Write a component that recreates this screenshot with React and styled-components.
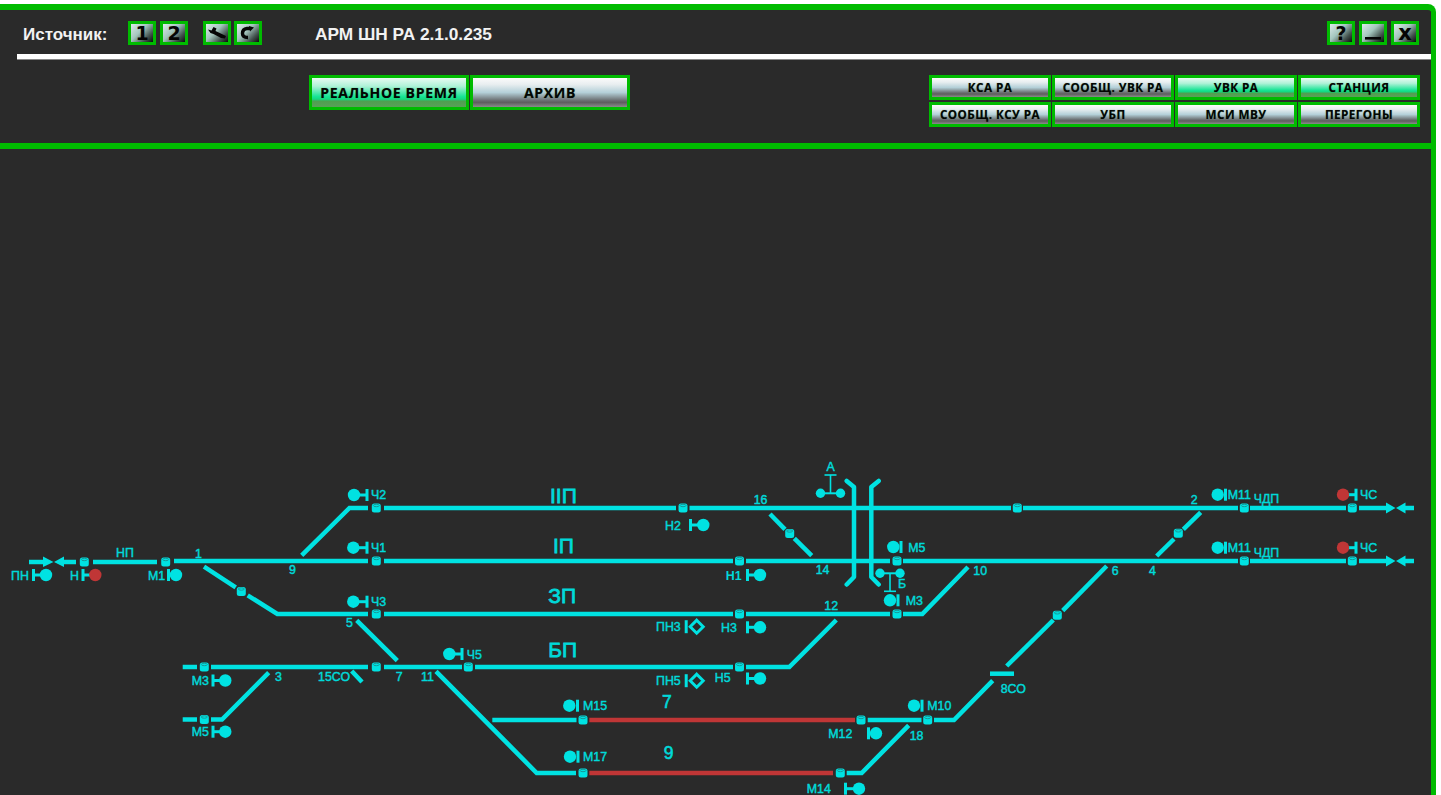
import styled, { createGlobalStyle, css } from "styled-components";

const GREEN = "#00bb00";
const CYAN = "#00e2e2";
const RED = "#c03636";

const GlobalStyle = createGlobalStyle`
  html, body {
    margin: 0;
    background: #fff;
    overflow: hidden;
  }
`;

const Window = styled.div`
  box-sizing: border-box;
  width: 1436px;
  height: 791px;
  margin-top: 4px;
  background: #2a2a2a;
  border-top: 6px solid ${GREEN};
  border-right: 5px solid ${GREEN};
  border-top-right-radius: 8px;
  overflow: hidden;
  font-family: "Liberation Sans", Arial, sans-serif;
`;

const Header = styled.header`
  height: 133px;
  border-bottom: 6px solid ${GREEN};
`;

const Toolbar = styled.div`
  display: flex;
  align-items: center;
  height: 44px;
  padding: 2px 12px 0 23px;
  box-sizing: border-box;
`;

const SourceLabel = styled.span`
  width: 105px;
  padding-top: 4px;
  color: #f2f2f2;
  font-size: 17px;
  font-weight: 700;
`;

const IconGroup = styled.div`
  display: flex;
  gap: ${(p) => p.$gap || 4}px;
  margin-right: ${(p) => p.$after || 0}px;
`;

const IconButton = styled.button`
  box-sizing: border-box;
  width: 28px;
  height: 24px;
  padding: 0;
  display: flex;
  align-items: center;
  justify-content: center;
  border: 3px solid ${GREEN};
  background: linear-gradient(135deg, #dfeaea 0%, #a4c6be 42%, #43524e 75%, #0b0b0b 100%);
  color: #050505;
  font-family: "DejaVu Sans", sans-serif;
  font-size: ${(p) => p.$size || 19}px;
  font-weight: 700;
  line-height: 1;
`;

const Title = styled.span`
  padding-top: 2px;
  color: #f2f2f2;
  font-size: 17.3px;
  font-weight: 700;
  flex: 1;
`;

const Rule = styled.div`
  height: 6px;
  margin-left: 17px;
  background: #fff;
  border-bottom: 1px solid #888;
  box-sizing: border-box;
`;

const NavRow = styled.div`
  display: flex;
  justify-content: space-between;
  padding: 15px 11px 0 309px;
`;

const NavPair = styled.div`
  display: flex;
  gap: 1px;
`;

const NavGrid = styled.div`
  display: grid;
  grid-template-columns: repeat(4, 122px);
  grid-auto-rows: 25.5px;
  gap: 1.5px 1px;
  margin-top: -0.5px;
`;

const gloss = css`
  background: ${(p) =>
    p.$active
      ? "linear-gradient(180deg, #e8faf2 0%, #b0f2d8 28%, #18e495 64%, #12d880 73%, #4f9f50 80%, #5aa058 100%)"
      : "linear-gradient(180deg, #fbfbfb 0%, #e8eef0 22%, #b4d0d8 50%, #6e7476 76%, #5e5e5e 84%, #8a8a8a 100%)"};
`;

const NavButton = styled.button`
  ${gloss}
  box-sizing: border-box;
  padding: 0;
  border: 3px solid ${GREEN};
  color: #030503;
  font-family: "Open Sans", sans-serif;
  font-weight: 700;
  white-space: nowrap;
  text-shadow: 0 0 1px rgba(0, 70, 0, 0.5);
`;

const BigButton = styled(NavButton)`
  width: 160px;
  height: 35px;
  font-size: 14px;
  letter-spacing: 0.7px;
`;

const SmallButton = styled(NavButton)`
  height: 25.5px;
  font-size: 11.7px;
  letter-spacing: 0.45px;
`;

const Scheme = styled.svg`
  display: block;
  width: 1431px;
  height: 646px;
`;

const Track = styled.polyline`
  fill: none;
  stroke: ${(p) => (p.$red ? RED : CYAN)};
  stroke-width: ${(p) => p.$w || 4.5}px;
  stroke-linejoin: ${(p) => (p.$round ? "round" : "miter")};
  stroke-linecap: ${(p) => (p.$round ? "round" : "butt")};
`;

const Thin = styled.line`
  stroke: ${CYAN};
  stroke-width: ${(p) => p.$w || 3}px;
`;

const Ball = styled.circle`
  fill: ${(p) => (p.$red ? RED : CYAN)};
`;

const Arrowhead = styled.polygon`
  fill: ${CYAN};
`;

const Diamond = styled.polygon`
  fill: none;
  stroke: ${CYAN};
  stroke-width: 3px;
`;

const JointBody = styled.rect`
  fill: ${CYAN};
`;

const JointTop = styled.ellipse`
  fill: none;
  stroke: #149a9a;
  stroke-width: 1px;
`;

const Label = styled.text`
  fill: #00d9d9;
  font-family: "Liberation Sans", Arial, sans-serif;
  font-size: ${(p) => p.$size || 12.4}px;
  font-weight: ${(p) => (p.$bold ? 700 : 400)};
  stroke: #00d9d9;
  stroke-width: ${(p) => (p.$bold ? 0 : p.$stroke || 0.45)}px;
`;

const tracks = [
  // arrows and left throat
  "29,562 45,562", "64,562 76,562", "93,562 157,562", "174,561 368,561",
  // II
  "301.7,555.3 349.5,508 368,508", "384,508 676,508", "689.5,508 1011,508", "1023,508 1238,508", "1250,508 1346,508", "1359,508 1387,508", "1405,508 1414,508",
  // I
  "384,561 733,561", "746,561 890,561", "903,561 1238,561", "1250,561 1346,561", "1359,561 1387,561", "1405,561 1414,561",
  // 3
  "204,566.7 235.7,587.3", "247.7,595.3 277.3,614 368,614", "384,614 733,614", "746,614 890,614", "903,614 922.3,614 968,567",
  // Б
  "182.7,667 197,667", "211,667 368,667", "384,667 462,667", "475,667 733,667", "746,667 789.3,667 836.3,620",
  "356.7,620.3 397.3,660.7", "351.7,671 362,682",
  "182.7,719.5 197,719.5", "211,719.5 222,719.5 268.7,672.7",
  "436,671.3 536.7,773 576,773", "846.7,773 861.7,773 908.7,725.3",
  "492.3,720 576.5,720", "867.7,720 921.5,720", "934,720 954,720 992.7,680.7",
  "990,673.7 1014,673.7",
  "1006.7,666 1053.3,620", "1062.7,610.7 1106.7,566",
  "1156.7,556 1174,539", "1183.3,529.3 1200.7,512.3",
  "770,514 785,529.3", "794.3,538.3 811.7,555.7",
];

const bridges = [
  "846.7,481 854,487 854,577 846.7,584.5",
  "878.7,481 871.3,487 871.3,577 878.7,584.5",
];

const joints = [
  [84.3, 562], [165.7, 562], [376.3, 508], [376.3, 561], [376.3, 614], [376.3, 667],
  [204.3, 667], [204.3, 719.5], [241.3, 591.5], [468.3, 667], [683, 508], [739.5, 561],
  [739.5, 614], [739.5, 667], [789.7, 533.5], [897, 561], [897, 614], [1017.3, 508],
  [1057.3, 615.3], [1178.3, 533.3], [1244.3, 508], [1244.3, 561], [1352.3, 508], [1352.3, 561],
  [583, 720], [583, 773], [861, 720], [840.3, 773], [927.7, 720],
];

// ball x, ball y, bar x, red lamp, stem between ball and bar
const signals = [
  [354, 495, 367, false, true], [353.3, 547.7, 367, false, true], [353.3, 601.7, 367, false, true],
  [449.3, 654, 462, false, true], [46, 575, 33.5, false, true], [95.3, 575, 83, true, true],
  [176, 575, 168.5, false, true], [225.3, 680.5, 213, false, true], [225.3, 731.7, 213, false, true],
  [703.3, 525, 690.5, false, true], [760, 575, 747.5, false, true], [760, 627.3, 747.5, false, true],
  [760, 678.5, 747.5, false, true], [569.3, 705.7, 577.5, false, false], [570, 756.7, 578, false, false],
  [876, 733.3, 868.5, false, false], [859, 788.7, 845.5, false, true], [914, 705.7, 922, false, false],
  [893.3, 547, 901, false, false], [890, 600.3, 898, false, false], [1217.7, 494.7, 1225.5, false, false],
  [1217.7, 547.7, 1225.5, false, false], [1343, 494.7, 1356, true, true], [1343, 547.7, 1356, true, true],
];

const labels = [
  ["Ч2", 371, 499], ["Ч1", 371, 552], ["Ч3", 371, 606], ["Ч5", 466.7, 659],
  ["ПН", 11, 579.5], ["Н", 70, 579.5], ["М1", 148, 579.5], ["НП", 116, 557.3],
  ["1", 195, 557.7], ["9", 289, 574.3], ["5", 346, 627], ["3", 275, 681.3],
  ["15СО", 318, 681.3], ["7", 395.7, 681.3], ["11", 421, 681.3],
  ["М3", 191.7, 685], ["М5", 191.7, 736],
  ["Н2", 665, 529.5], ["Н3", 721, 632], ["Н5", 714.7, 682],
  ["ПН3", 656, 631], ["ПН5", 656, 685],
  ["16", 753.7, 504.3], ["14", 815.7, 573.7], ["12", 824.3, 610], ["18", 909.7, 740],
  ["10", 973.3, 574.7], ["6", 1111.7, 574.7], ["4", 1149, 574.7], ["2", 1190.7, 504],
  ["8СО", 1000.7, 692.7], ["А", 826.5, 470.7], ["Б", 898, 588],
  ["М5", 908.3, 551.5], ["М3", 905.7, 605], ["М15", 583, 710], ["М17", 583, 761],
  ["М12", 828.3, 738], ["М14", 806.7, 793], ["М10", 927.3, 710],
  ["М11", 1227.7, 499], ["М11", 1227.7, 552], ["ЧДП", 1253.7, 503], ["ЧДП", 1253.7, 556.7],
  ["ЧС", 1360, 499], ["ЧС", 1360, 552],
];

const bigLabels = [
  ["IIП", 550, 502.7], ["IП", 553, 552.7], ["ЗП", 548.3, 603.3], ["БП", 548.3, 657.3],
];

const topNav = [
  ["КСА РА"], ["СООБЩ. УВК РА"], ["УВК РА", true], ["СТАНЦИЯ", true],
  ["СООБЩ. КСУ РА"], ["УБП"], ["МСИ МВУ"], ["ПЕРЕГОНЫ"],
];

function Joint({ x, y }) {
  return (
    <g>
      <JointBody x={x - 4.5} y={y - 4.5} width={9} height={9} rx={2.5} />
      <JointTop cx={x} cy={y - 2.5} rx={3} ry={1.2} />
    </g>
  );
}

function Signal({ x, y, barX, red, stem }) {
  return (
    <g>
      {stem && <Thin x1={x} y1={y} x2={barX} y2={y} />}
      <Ball cx={x} cy={y} r={6.2} $red={red} />
      <Thin x1={barX} y1={y - 6} x2={barX} y2={y + 6} />
    </g>
  );
}

function ShuntSignal({ x, y }) {
  return (
    <g>
      <Thin x1={x - 10.5} y1={y - 6.5} x2={x - 10.5} y2={y + 6.5} />
      <Diamond points={`${x},${y - 6.5} ${x + 6.5},${y} ${x},${y + 6.5} ${x - 6.5},${y}`} />
    </g>
  );
}

function Derail({ x, y, stemEnd, barY }) {
  return (
    <g>
      <Thin x1={x - 10} y1={y} x2={x + 10} y2={y} $w={2} />
      <Ball cx={x - 10} cy={y} r={4.7} />
      <Ball cx={x + 10} cy={y} r={4.7} />
      <Thin x1={x} y1={y} x2={x} y2={stemEnd} $w={1.6} />
      <Thin x1={x - 6} y1={barY} x2={x + 6} y2={barY} $w={1.6} />
    </g>
  );
}

function Wrench() {
  return (
    <svg width="20" height="14" viewBox="0 0 20 14">
      <path d="M1 3.5 L4.5 4.5 L6.5 1 L9.5 2.5 L8.5 5 L19 10 L18 12.5 L14 12 L6.5 8 L3.5 7 Z" fill="#050505" />
    </svg>
  );
}

function BackArrow() {
  return (
    <svg width="18" height="14" viewBox="0 0 18 14">
      <path d="M11 2.5 L8 2.5 Q3.5 3 3.5 7.5 Q3.5 11.5 9 11.5" fill="none" stroke="#050505" strokeWidth="3.4" />
      <path d="M10 0 L15 1.5 L11 5.5 Z" fill="#050505" />
    </svg>
  );
}

function Minimize() {
  return (
    <svg width="18" height="16" viewBox="0 0 18 16">
      <rect x="1" y="12" width="16" height="2.6" fill="#050505" />
    </svg>
  );
}

export default function App() {
  return (
    <>
      <GlobalStyle />
      <Window>
        <Header>
          <Toolbar>
            <SourceLabel>Источник:</SourceLabel>
            <IconGroup $after={15}>
              <IconButton>1</IconButton>
              <IconButton>2</IconButton>
            </IconGroup>
            <IconGroup $gap={3} $after={53}>
              <IconButton><Wrench /></IconButton>
              <IconButton><BackArrow /></IconButton>
            </IconGroup>
            <Title>АРМ ШН РА 2.1.0.235</Title>
            <IconGroup>
              <IconButton>?</IconButton>
              <IconButton><Minimize /></IconButton>
              <IconButton $size={21}>x</IconButton>
            </IconGroup>
          </Toolbar>
          <Rule />
          <NavRow>
            <NavPair>
              <BigButton $active>РЕАЛЬНОЕ ВРЕМЯ</BigButton>
              <BigButton>АРХИВ</BigButton>
            </NavPair>
            <NavGrid>
              {topNav.map(([text, active]) => (
                <SmallButton key={text} $active={active}>{text}</SmallButton>
              ))}
            </NavGrid>
          </NavRow>
        </Header>

        <Scheme viewBox="0 149 1431 646">
          {tracks.map((points) => (
            <Track key={points} points={points} />
          ))}
          <Track points="589.3,720 855,720" $red />
          <Track points="589.3,773 833,773" $red />
          {bridges.map((points) => (
            <Track key={points} points={points} $round />
          ))}

          <Arrowhead points="43,556.5 53.5,562 43,567" />
          <Arrowhead points="54,562 64,556.5 64,567" />
          {[508, 561].map((y) => (
            <g key={y}>
              <Arrowhead points={`1386,${y - 5.5} 1395.5,${y} 1386,${y + 5.5}`} />
              <Arrowhead points={`1396,${y} 1405.5,${y - 5.5} 1405.5,${y + 5.5}`} />
            </g>
          ))}

          {joints.map(([x, y]) => (
            <Joint key={`${x}-${y}`} x={x} y={y} />
          ))}
          {signals.map(([x, y, barX, red, stem]) => (
            <Signal key={`${x}-${y}`} x={x} y={y} barX={barX} red={red} stem={stem} />
          ))}
          <ShuntSignal x={696.7} y={626.7} />
          <ShuntSignal x={696.7} y={680.7} />
          <Derail x={830.5} y={493.3} stemEnd={475} barY={475} />
          <Derail x={890} y={573.3} stemEnd={591.3} barY={591.3} />

          {labels.map(([text, x, y]) => (
            <Label key={`${text}-${x}-${y}`} x={x} y={y}>{text}</Label>
          ))}
          <Label x={725.7} y={579.5} $bold>Н1</Label>
          {bigLabels.map(([text, x, y]) => (
            <Label key={text} x={x} y={y} $size={21} $stroke={0.8}>{text}</Label>
          ))}
          <Label x={662} y={707.7} $size={17.5} $stroke={0.6}>7</Label>
          <Label x={663.7} y={758.7} $size={17.5} $stroke={0.6}>9</Label>
        </Scheme>
      </Window>
    </>
  );
}
